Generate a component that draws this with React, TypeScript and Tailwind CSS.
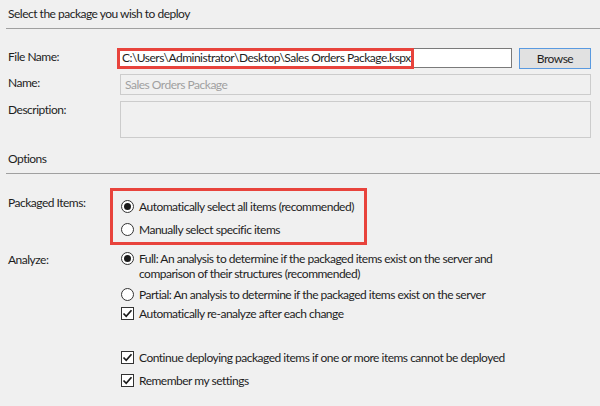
import type { ReactNode } from "react";

function Radio({ checked, children }: { checked?: boolean; children: ReactNode }) {
  return (
    <div className="flex items-start gap-[5px]">
      <span className="mt-[1px] flex h-[13px] w-[13px] shrink-0 items-center justify-center rounded-full border border-[#333] bg-white">
        {checked && <span className="h-[7px] w-[7px] rounded-full bg-[#1a1a1a]" />}
      </span>
      <span className="whitespace-nowrap leading-[15px]">{children}</span>
    </div>
  );
}

function Check({ children }: { children: ReactNode }) {
  return (
    <div className="flex items-start gap-[5px]">
      <span className="mt-[1px] flex h-[13px] w-[13px] shrink-0 items-center justify-center border border-[#333] bg-white">
        <svg width="11" height="11" viewBox="0 0 11 11">
          <path d="M1.5 5.5 L4.2 8.3 L9.5 2.2" fill="none" stroke="#1a1a1a" strokeWidth="1.7" />
        </svg>
      </span>
      <span className="whitespace-nowrap leading-[15px]">{children}</span>
    </div>
  );
}

function Header({ title }: { title: string }) {
  return (
    <div>
      <div className="h-[26px] pl-2 pt-[4px] leading-[15px]">{title}</div>
      <div className="ml-[6px] h-px bg-[#a0a0a0]" />
    </div>
  );
}

export default function App() {
  return (
    <div
      className="h-[406px] w-[600px] overflow-hidden bg-[#f0f0f0] text-[12px] tracking-[-0.5px] text-[#1e1e1e]"
      style={{ fontFamily: 'Lato, "Noto Sans", sans-serif' }}
    >
      <div className="pt-[2px]">
        <Header title="Select the package you wish to deploy" />
      </div>

      <div className="mt-[19px] flex flex-col">
        <div className="flex h-[21px]">
          <div className="w-[117px] pl-2 pt-[1px] leading-[15px]">File Name:</div>
          <div className="relative flex h-[20px] w-[395px] items-center border border-[#7a7a7a] bg-white pl-[4px]">
            C:\Users\Administrator\Desktop\Sales Orders Package.kspx
            <div className="absolute -left-px -top-px h-[21px] w-[297px] border-[3px] border-[#e8433c]" />
          </div>
          <button className="ml-[7px] h-[21px] w-[72px] border border-[#5a9ae0] bg-[#e1e1e1] text-[12px] leading-[15px]">
            Browse
          </button>
        </div>

        <div className="mt-[5px] flex h-[21px]">
          <div className="w-[120px] pl-2 pt-[1px] leading-[15px]">Name:</div>
          <div className="flex h-[21px] w-[471px] items-center border border-[#cccccc] pl-[4px] text-[#a0a0a0]">
            Sales Orders Package
          </div>
        </div>

        <div className="mt-[6px] flex">
          <div className="w-[120px] pl-2 pt-[1px] leading-[15px]">Description:</div>
          <div className="h-[37px] w-[471px] border border-[#cccccc]" />
        </div>
      </div>

      <div className="mt-[9px]">
        <Header title="Options" />
      </div>

      <div className="mt-[14px] flex">
        <div className="w-[110px] pl-2 pt-[7px] leading-[15px]">Packaged Items:</div>
        <div className="flex h-[57px] w-[257px] flex-col gap-[8px] border-[3px] border-[#e8433c] pl-[8px] pt-[8px]">
          <Radio checked>Automatically select all items (recommended)</Radio>
          <Radio>Manually select specific items</Radio>
        </div>
      </div>

      <div className="mt-[6px] flex">
        <div className="w-[121px] pl-2 pt-[1px] leading-[15px]">Analyze:</div>
        <div className="flex flex-col">
          <Radio checked>
            Full: An analysis to determine if the packaged items exist on the server and
            <br />
            comparison of their structures (recommended)
          </Radio>
          <div className="mt-[6px]">
            <Radio>Partial: An analysis to determine if the packaged items exist on the server</Radio>
          </div>
          <div className="mt-[4px]">
            <Check>Automatically re-analyze after each change</Check>
          </div>
          <div className="mt-[29px]">
            <Check>Continue deploying packaged items if one or more items cannot be deployed</Check>
          </div>
          <div className="mt-[8px]">
            <Check>Remember my settings</Check>
          </div>
        </div>
      </div>
    </div>
  );
}
